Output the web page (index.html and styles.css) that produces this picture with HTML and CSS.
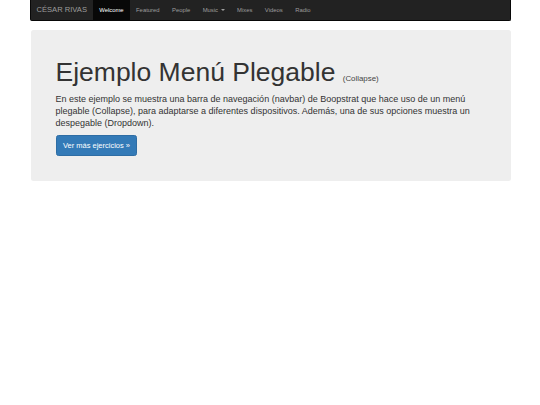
FILE: index.html
```html
<!DOCTYPE html>
<html lang="es">
<head>
    <meta charset="UTF-8">
    <meta name="viewport" content="width=device-width, initial-scale=1.0">
    <title>Ejemplo Menú Plegable</title>
    <link rel="stylesheet" href="styles.css">
</head>
<body>
    <div class="container">
        <nav class="navbar">
            <a href="#" class="brand">CÉSAR RIVAS</a>
            <ul class="nav">
                <li><a href="#" class="active">Welcome</a></li>
                <li><a href="#">Featured</a></li>
                <li><a href="#">People</a></li>
                <li><a href="#">Music <span class="caret"></span></a></li>
                <li><a href="#">Mixes</a></li>
                <li><a href="#">Videos</a></li>
                <li><a href="#">Radio</a></li>
            </ul>
        </nav>

        <div class="jumbotron">
            <h1>Ejemplo Menú Plegable <small>(Collapse)</small></h1>
            <p>En este ejemplo se muestra una barra de navegación (navbar) de Boopstrat que hace uso de un menú plegable (Collapse), para adaptarse a diferentes dispositivos. Además, una de sus opciones muestra un despegable (Dropdown).</p>
            <p><a href="#" class="btn">Ver más ejercicios &raquo;</a></p>
        </div>
    </div>
</body>
</html>
```

FILE: styles.css
```css
body {
    font-family: 'Liberation Sans', Arial, sans-serif;
    color: #333;
    background-color: #fff;
    margin: 0;
}
.container {
    width: 481px;
    margin: 0 auto;
}
.navbar {
    display: flex;
    align-items: stretch;
    height: 21px;
    background-color: #222;
    border: 1px solid #080808;
    border-top: none;
    border-radius: 0 0 2px 2px;
    box-sizing: border-box;
    margin-bottom: 9px;
}
.brand {
    font-size: 7.6px;
    line-height: 20px;
    padding: 0 6px;
    color: #9d9d9d;
    text-decoration: none;
}
.nav {
    display: flex;
    list-style: none;
    margin: 0;
    padding: 0;
}
.nav a {
    display: block;
    font-size: 5.9px;
    line-height: 20px;
    padding: 0 6.2px;
    color: #9d9d9d;
    text-decoration: none;
}
.nav a.active {
    color: #fff;
    background-color: #080808;
}
.caret {
    display: inline-block;
    width: 0;
    height: 0;
    margin-left: 1px;
    vertical-align: middle;
    border-top: 2px solid;
    border-left: 2px solid transparent;
    border-right: 2px solid transparent;
}
.jumbotron {
    margin-left: 1px;
    background-color: #eee;
    border-radius: 2.5px;
    padding: 20px 25px 19px;
}
.jumbotron h1 {
    font-size: 26.5px;
    font-weight: 400;
    line-height: 1.1;
    margin: 8px 0 6px;
}
.jumbotron h1 small {
    font-size: 7.9px;
    color: #444;
}
.jumbotron p {
    font-size: 9px;
    line-height: 12px;
    margin: 0 0 6px;
}
.btn {
    display: inline-block;
    font-size: 7.5px;
    line-height: 10px;
    padding: 4.5px 6.4px;
    color: #fff;
    background-color: #337ab7;
    border: 0.5px solid #2e6da4;
    border-radius: 2.5px;
    text-decoration: none;
}
```
